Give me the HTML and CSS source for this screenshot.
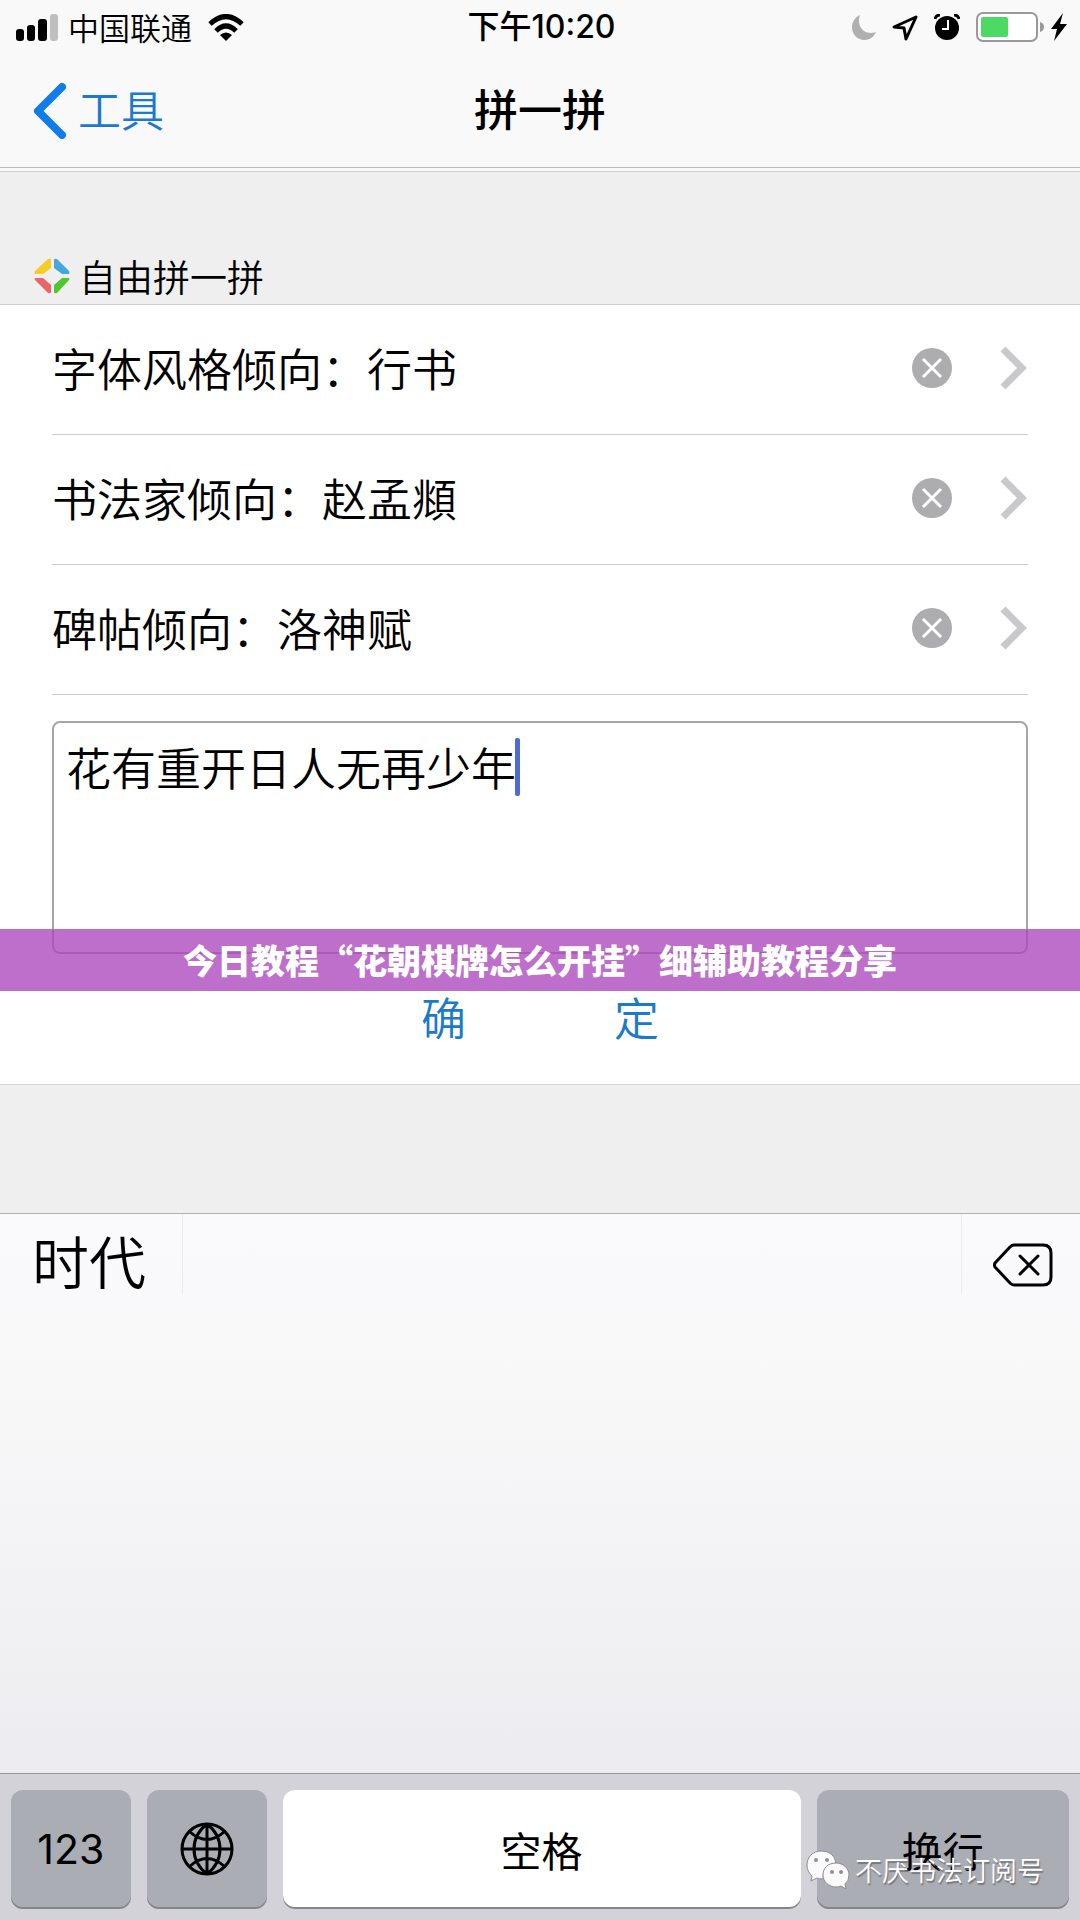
FILE: index.html
```html
<!DOCTYPE html>
<html lang="zh-CN">
<head>
  <meta charset="UTF-8">
  <meta name="viewport" content="width=device-width, initial-scale=1.0">
  <title>拼一拼</title>
  <link rel="stylesheet" href="styles.css">
</head>
<body>

  <header class="top">
    <div class="status-bar">
      <div class="status-left">
        <svg width="42" height="27" viewBox="0 0 42 27">
          <rect x="0" y="15" width="8" height="12" rx="3"/>
          <rect x="11" y="11" width="8" height="16" rx="3"/>
          <rect x="22" y="5" width="9" height="22" rx="3"/>
          <rect x="34" y="0" width="8" height="27" rx="3" fill="#bfbfbf"/>
        </svg>
        <span class="carrier">中国联通</span>
        <svg width="36" height="27" viewBox="0 0 36 27">
          <path d="M2 10Q18-5 34 10M8 17Q18 7 28 17" fill="none" stroke="#000" stroke-width="5"/>
          <path d="M18 27L12 21Q18 16 24 21Z"/>
        </svg>
      </div>
      <span class="clock">下午10:20</span>
      <div class="status-right">
        <svg width="24" height="25" viewBox="0 0 24 25">
          <path d="M8 0C3 2 0 7 0 12.500C0 19.500 5.500 25 12.500 25C17.500 25 22 22 24 17C13 21 4 12 8 0Z" fill="#b0b0b0"/>
        </svg>
        <svg width="26" height="27" viewBox="0 0 26 27">
          <path d="M2 13L24 3L14 25L12 14Z" fill="none" stroke="#000" stroke-width="3" stroke-linejoin="round"/>
        </svg>
        <svg width="26" height="26" viewBox="0 0 26 26">
          <circle cx="13" cy="14" r="12"/>
          <path d="M1 5Q2 1 6 1M20 1Q24 1 25 5" fill="none" stroke="#000" stroke-width="3"/>
          <path d="M14 6V15H8" fill="none" stroke="#fff" stroke-width="2"/>
        </svg>
        <svg width="69" height="30" viewBox="0 0 69 30">
          <rect x="1" y="1" width="60" height="28" rx="6" fill="#fff" stroke="#999" stroke-width="2"/>
          <rect x="5" y="5" width="27" height="20" rx="2" fill="#4cd964"/>
          <path d="M64 10Q68 11 68 15Q68 19 64 20Z" fill="#999"/>
        </svg>
        <svg width="16" height="28" viewBox="0 0 16 28">
          <path d="M12 0L0 16H6L3 28L16 11H9Z"/>
        </svg>
      </div>
    </div>
    <nav class="nav-bar">
      <a class="back" href="#">
        <svg width="32" height="56" viewBox="0 0 32 56">
          <path d="M28 4L4 28L28 52" fill="none" stroke="#107de8" stroke-width="8" stroke-linecap="round" stroke-linejoin="round"/>
        </svg>
        <span>工具</span>
      </a>
      <h1>拼一拼</h1>
    </nav>
  </header>

  <main>
    <h2 class="section-title">
      <svg width="36" height="36" viewBox="0 0 36 36">
        <path d="M14 1Q17 0 17 2V10L9 16H1Q0 15 1 13Z" fill="#f3cc25"/>
        <path d="M20 2Q20 0 23 1L35 13Q36 15 35 16H28L20 10Z" fill="#45a7dc"/>
        <path d="M1 20H9L17 27V34Q17 36 14 35L1 22Q0 21 1 20Z" fill="#eb6468"/>
        <path d="M28 20H35Q36 21 35 22L23 35Q20 36 20 34V27Z" fill="#50c62f"/>
      </svg>
      自由拼一拼
    </h2>

    <form class="panel">
      <ul class="options">
        <li>
          <span>字体风格倾向：行书</span>
          <button type="button" class="icon-btn" aria-label="清除">
            <svg width="40" height="40" viewBox="0 0 40 40"><circle cx="20" cy="20" r="20" fill="#adadaf"/><path d="M11 11L29 29M29 11L11 29" stroke="#fff" stroke-width="3"/></svg>
          </button>
          <button type="button" class="icon-btn" aria-label="选择">
            <svg width="28" height="44" viewBox="0 0 28 44"><path d="M3 3L22 22L3 41" fill="none" stroke="#c9c9cb" stroke-width="7"/></svg>
          </button>
        </li>
        <li>
          <span>书法家倾向：赵孟頫</span>
          <button type="button" class="icon-btn" aria-label="清除">
            <svg width="40" height="40" viewBox="0 0 40 40"><circle cx="20" cy="20" r="20" fill="#adadaf"/><path d="M11 11L29 29M29 11L11 29" stroke="#fff" stroke-width="3"/></svg>
          </button>
          <button type="button" class="icon-btn" aria-label="选择">
            <svg width="28" height="44" viewBox="0 0 28 44"><path d="M3 3L22 22L3 41" fill="none" stroke="#c9c9cb" stroke-width="7"/></svg>
          </button>
        </li>
        <li>
          <span>碑帖倾向：洛神赋</span>
          <button type="button" class="icon-btn" aria-label="清除">
            <svg width="40" height="40" viewBox="0 0 40 40"><circle cx="20" cy="20" r="20" fill="#adadaf"/><path d="M11 11L29 29M29 11L11 29" stroke="#fff" stroke-width="3"/></svg>
          </button>
          <button type="button" class="icon-btn" aria-label="选择">
            <svg width="28" height="44" viewBox="0 0 28 44"><path d="M3 3L22 22L3 41" fill="none" stroke="#c9c9cb" stroke-width="7"/></svg>
          </button>
        </li>
      </ul>
      <div class="input-box">
        <textarea aria-label="拼字内容">花有重开日人无再少年</textarea>
        <span class="caret"></span>
        <div class="banner">今日教程“花朝棋牌怎么开挂”细辅助教程分享</div>
      </div>
      <button type="button" class="confirm"><span>确</span><span>定</span></button>
    </form>
  </main>

  <section class="keyboard">
    <div class="candidates">
      <button type="button" class="candidate">时代</button>
      <button type="button" class="delete" aria-label="删除">
        <svg width="62" height="46" viewBox="0 0 62 46" fill="none" stroke="#000" stroke-width="3" stroke-linecap="round" stroke-linejoin="round">
          <path d="M22 3H51Q59 3 59 11V35Q59 43 51 43H22Q20 43 18 41L3 25Q2 23 3 21L18 5Q20 3 22 3Z"/>
          <path d="M28 14L46 32M46 14L28 32"/>
        </svg>
      </button>
    </div>
    <div class="keys">
      <button type="button" class="key">123</button>
      <button type="button" class="key" aria-label="切换键盘">
        <svg width="54" height="54" viewBox="0 0 54 54" fill="none" stroke="#000" stroke-width="3">
          <circle cx="27" cy="27" r="25"/>
          <path d="M27 2V52M2 27H52M27 2Q14 12 14 27T27 52M27 2Q40 12 40 27T27 52M10 10Q27 25 44 10M10 44Q27 29 44 44"/>
        </svg>
      </button>
      <button type="button" class="key space">空格</button>
      <button type="button" class="key enter">换行</button>
    </div>
    <div class="watermark">
      <svg width="44" height="40" viewBox="0 0 44 40">
        <path d="M15 1C7 1 1 7 1 15C1 20 3 23 6 26L5 31L11 28Q13 29 17 29Q16 15 30 13Q28 1 15 1Z"/>
        <path d="M30 13C22 13 17 18 17 25C17 32 23 37 30 37Q33 37 35 36L40 39L39 34Q43 31 43 25C43 18 37 13 30 13Z"/>
        <g fill="#8d8f96" stroke="none"><circle cx="10" cy="10" r="2"/><circle cx="21" cy="10" r="2"/><circle cx="26" cy="22" r="2"/><circle cx="35" cy="22" r="2"/></g>
      </svg>
      不厌书法订阅号
    </div>
  </section>

</body>
</html>
```

FILE: styles.css
```css
* {
  box-sizing: border-box;
}

body {
  margin: 0;
  min-height: 100vh;
  display: flex;
  flex-direction: column;
  background: #efeff0;
  color: #000;
  font-family: "Noto Sans CJK SC", sans-serif;
  font-weight: 350;
}

svg {
  display: block;
  flex: none;
}

button {
  padding: 0;
  border: none;
  background: none;
  color: inherit;
  font: inherit;
  cursor: pointer;
}

.top {
  height: 172px;
  background: #f9f9fa;
  border-bottom: 1px solid #cfcfd1;
}

.status-bar {
  display: grid;
  grid-template-columns: 1fr auto 1fr;
  align-items: center;
  height: 54px;
  padding: 0 13px 0 16px;
}

.status-left,
.status-right {
  display: flex;
  align-items: center;
}

.status-left {
  gap: 10px;
}

.carrier {
  margin-right: 6px;
  font-size: 31px;
  line-height: 40px;
}

.clock {
  font-family: Inter, "Noto Sans CJK SC", sans-serif;
  font-size: 32px;
  font-weight: 500;
  line-height: 40px;
}

.status-right {
  justify-content: flex-end;
  gap: 16px;
}

.status-right svg:last-child {
  margin-left: -10px;
}

.nav-bar {
  display: grid;
  grid-template-columns: 1fr auto 1fr;
  align-items: center;
  height: 114px;
  padding: 0 34px;
  border-bottom: 1px solid #bcbcbf;
}

.back {
  display: flex;
  align-items: center;
  gap: 12px;
  color: #1c7acb;
  font-size: 43px;
  line-height: 56px;
  text-decoration: none;
}

.back span,
h1 {
  padding-bottom: 6px;
}

h1 {
  margin: 0;
  font-size: 44px;
  font-weight: 500;
  line-height: 56px;
}

.section-title {
  display: flex;
  align-items: center;
  gap: 9px;
  margin: 0;
  padding: 80px 34px 4px;
  font-size: 37px;
  font-weight: 350;
  line-height: 48px;
}

.panel {
  background: #fff;
  border-top: 1px solid #cfcfd1;
  border-bottom: 1px solid #d5d5d6;
}

.options {
  margin: 0 52px;
  padding: 0;
  list-style: none;
}

.options li {
  display: flex;
  align-items: center;
  height: 130px;
  padding-bottom: 4px;
  border-bottom: 1px solid #cdcdce;
  font-size: 45px;
  line-height: 60px;
}

.options span {
  flex: 1;
}

.icon-btn + .icon-btn {
  margin-left: 48px;
}

.input-box {
  position: relative;
  padding: 26px 52px 0;
}

textarea {
  display: block;
  width: 100%;
  height: 233px;
  padding: 14px 12px;
  border: 2px solid #a6a6a7;
  border-radius: 8px;
  outline: none;
  background: #fff;
  resize: none;
  color: #000;
  font: inherit;
  font-size: 45px;
  line-height: 60px;
}

/* sits right after the tenth character */
.caret {
  position: absolute;
  top: 43px;
  left: 515px;
  width: 5px;
  height: 58px;
  border-radius: 2px;
  background: #4d6bd0;
}

.banner {
  position: absolute;
  right: 0;
  bottom: -37px;
  left: 0;
  background: rgba(171, 71, 188, 0.78);
  color: #fff;
  font-size: 34px;
  font-weight: 900;
  line-height: 62px;
  text-align: center;
}

.confirm {
  display: flex;
  justify-content: center;
  gap: 148px;
  width: 100%;
  padding: 33px 0 37px;
  color: #1c7acb;
  font-size: 45px;
  line-height: 60px;
}

.keyboard {
  position: relative;
  display: flex;
  flex: 1;
  flex-direction: column;
  margin-top: 128px;
  border-top: 1px solid #b0b0b2;
  background: linear-gradient(#fafafc, #f8f8f9 25%, #e8e8ed);
}

.candidates {
  display: flex;
  justify-content: space-between;
  height: 80px;
}

.candidate {
  padding: 10px 36px 0 32px;
  border-right: 1px solid #ececef;
  font-size: 57px;
  line-height: 66px;
}

.delete {
  padding: 22px 26px 0 30px;
  border-left: 1px solid #ececef;
}

.keys {
  display: grid;
  grid-template-columns: 120fr 120fr 519fr 253fr;
  gap: 16px;
  margin-top: auto;
  padding: 16px 11px 11px;
  border-top: 1px solid #98989d;
  background: #d2d2d8;
}

.key {
  display: flex;
  align-items: center;
  justify-content: center;
  height: 119px;
  padding-bottom: 2px;
  border-radius: 12px;
  background: #abadb5;
  box-shadow: inset 0 -2px #85868c;
  font-family: Inter, "Noto Sans CJK SC", sans-serif;
  font-size: 41px;
  font-weight: 400;
}

.space {
  background: #fff;
}

.watermark {
  position: absolute;
  right: 36px;
  bottom: 30px;
  display: flex;
  align-items: center;
  gap: 5px;
  color: #fff;
  font-size: 27px;
  line-height: 40px;
  text-shadow: 1px 2px 1px #77777c;
}

.watermark svg {
  fill: #fafafa;
  stroke: #8d8f96;
}
```
